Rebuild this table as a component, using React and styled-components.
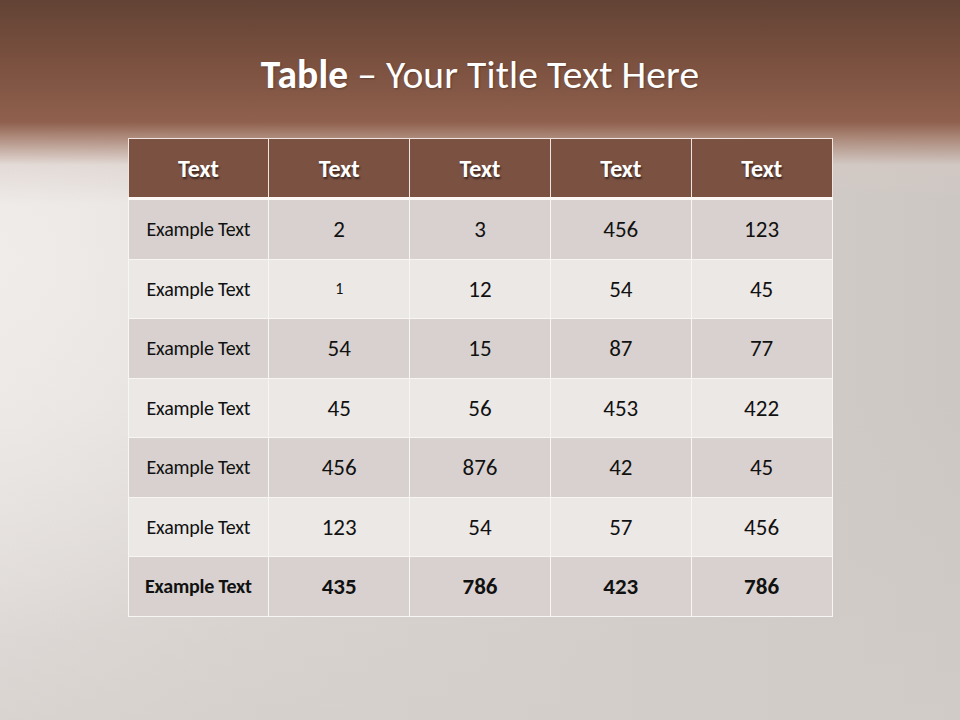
import React from "react";
import styled, { createGlobalStyle } from "styled-components";

const Global = createGlobalStyle`
  html, body { margin: 0; padding: 0; }
  body { font-family: Carlito, Lato, "Open Sans", sans-serif; }
`;

const Slide = styled.div`
  width: 960px;
  height: 720px;
  overflow: hidden;
  display: flex;
  flex-direction: column;
  align-items: center;
  background:
    linear-gradient(180deg, #624335 0px, #7a503f 60px, #8f604d 122px, rgba(165,125,108,0.85) 138px, rgba(215,200,194,0.45) 165px, rgba(230,225,222,0) 205px),
    radial-gradient(ellipse 420px 380px at 0px 260px, rgba(240,237,235,0.9), rgba(240,237,235,0) 100%),
    linear-gradient(180deg, rgba(211,205,201,0) 55%, rgba(211,205,201,0.7) 100%),
    linear-gradient(90deg, #e8e4e2 0%, #ded9d6 25%, #d5d0cc 60%, #ccc7c3 100%);
`;

const Title = styled.h1`
  margin: 51px 0 0;
  height: 48px;
  font-size: 39.5px;
  line-height: 48px;
  font-weight: 400;
  color: #fff;
  letter-spacing: 0.1px;
  text-shadow: 1px 1px 2px rgba(0,0,0,0.25);
  b { font-weight: 700; }
`;

const Table = styled.table`
  margin-top: 39px;
  width: 705px;
  border-collapse: collapse;
  table-layout: fixed;
`;

const Th = styled.th`
  height: 58px;
  padding: 0;
  background: #7b5142;
  color: #fff;
  font-size: 24px;
  font-weight: 700;
  text-align: center;
  border: 1px solid #efe4df;
  border-bottom: 3px solid #fbf8f6;
  text-shadow: 1px 2px 2px rgba(0,0,0,0.55);
`;

const Td = styled.td`
  height: 58.5px;
  padding: 0;
  text-align: center;
  color: #111;
  background: ${p => (p.$alt ? "#ebe8e6" : "#d8d1cf")};
  border: 1px solid #f8f6f5;
  font-size: ${p => (p.$label ? "20px" : p.$small ? "16px" : "23px")};
  font-weight: ${p => (p.$bold ? 700 : 400)};
  letter-spacing: ${p => (p.$label ? "-0.2px" : "0")};
`;

const rows = [
  ["2", "3", "456", "123"],
  ["1", "12", "54", "45"],
  ["54", "15", "87", "77"],
  ["45", "56", "453", "422"],
  ["456", "876", "42", "45"],
  ["123", "54", "57", "456"],
  ["435", "786", "423", "786"],
];

export default function App() {
  return (
    <>
      <Global />
      <Slide>
        <Title>
          <b>Table</b> – Your Title Text Here
        </Title>
        <Table>
          <thead>
            <tr>
              {[0, 1, 2, 3, 4].map(i => (
                <Th key={i}>Text</Th>
              ))}
            </tr>
          </thead>
          <tbody>
            {rows.map((r, ri) => {
              const alt = ri % 2 === 1;
              const bold = ri === rows.length - 1;
              return (
                <tr key={ri}>
                  <Td $alt={alt} $label $bold={bold}>Example Text</Td>
                  {r.map((v, ci) => (
                    <Td key={ci} $alt={alt} $bold={bold} $small={ri === 1 && ci === 0}>
                      {v}
                    </Td>
                  ))}
                </tr>
              );
            })}
          </tbody>
        </Table>
      </Slide>
    </>
  );
}
